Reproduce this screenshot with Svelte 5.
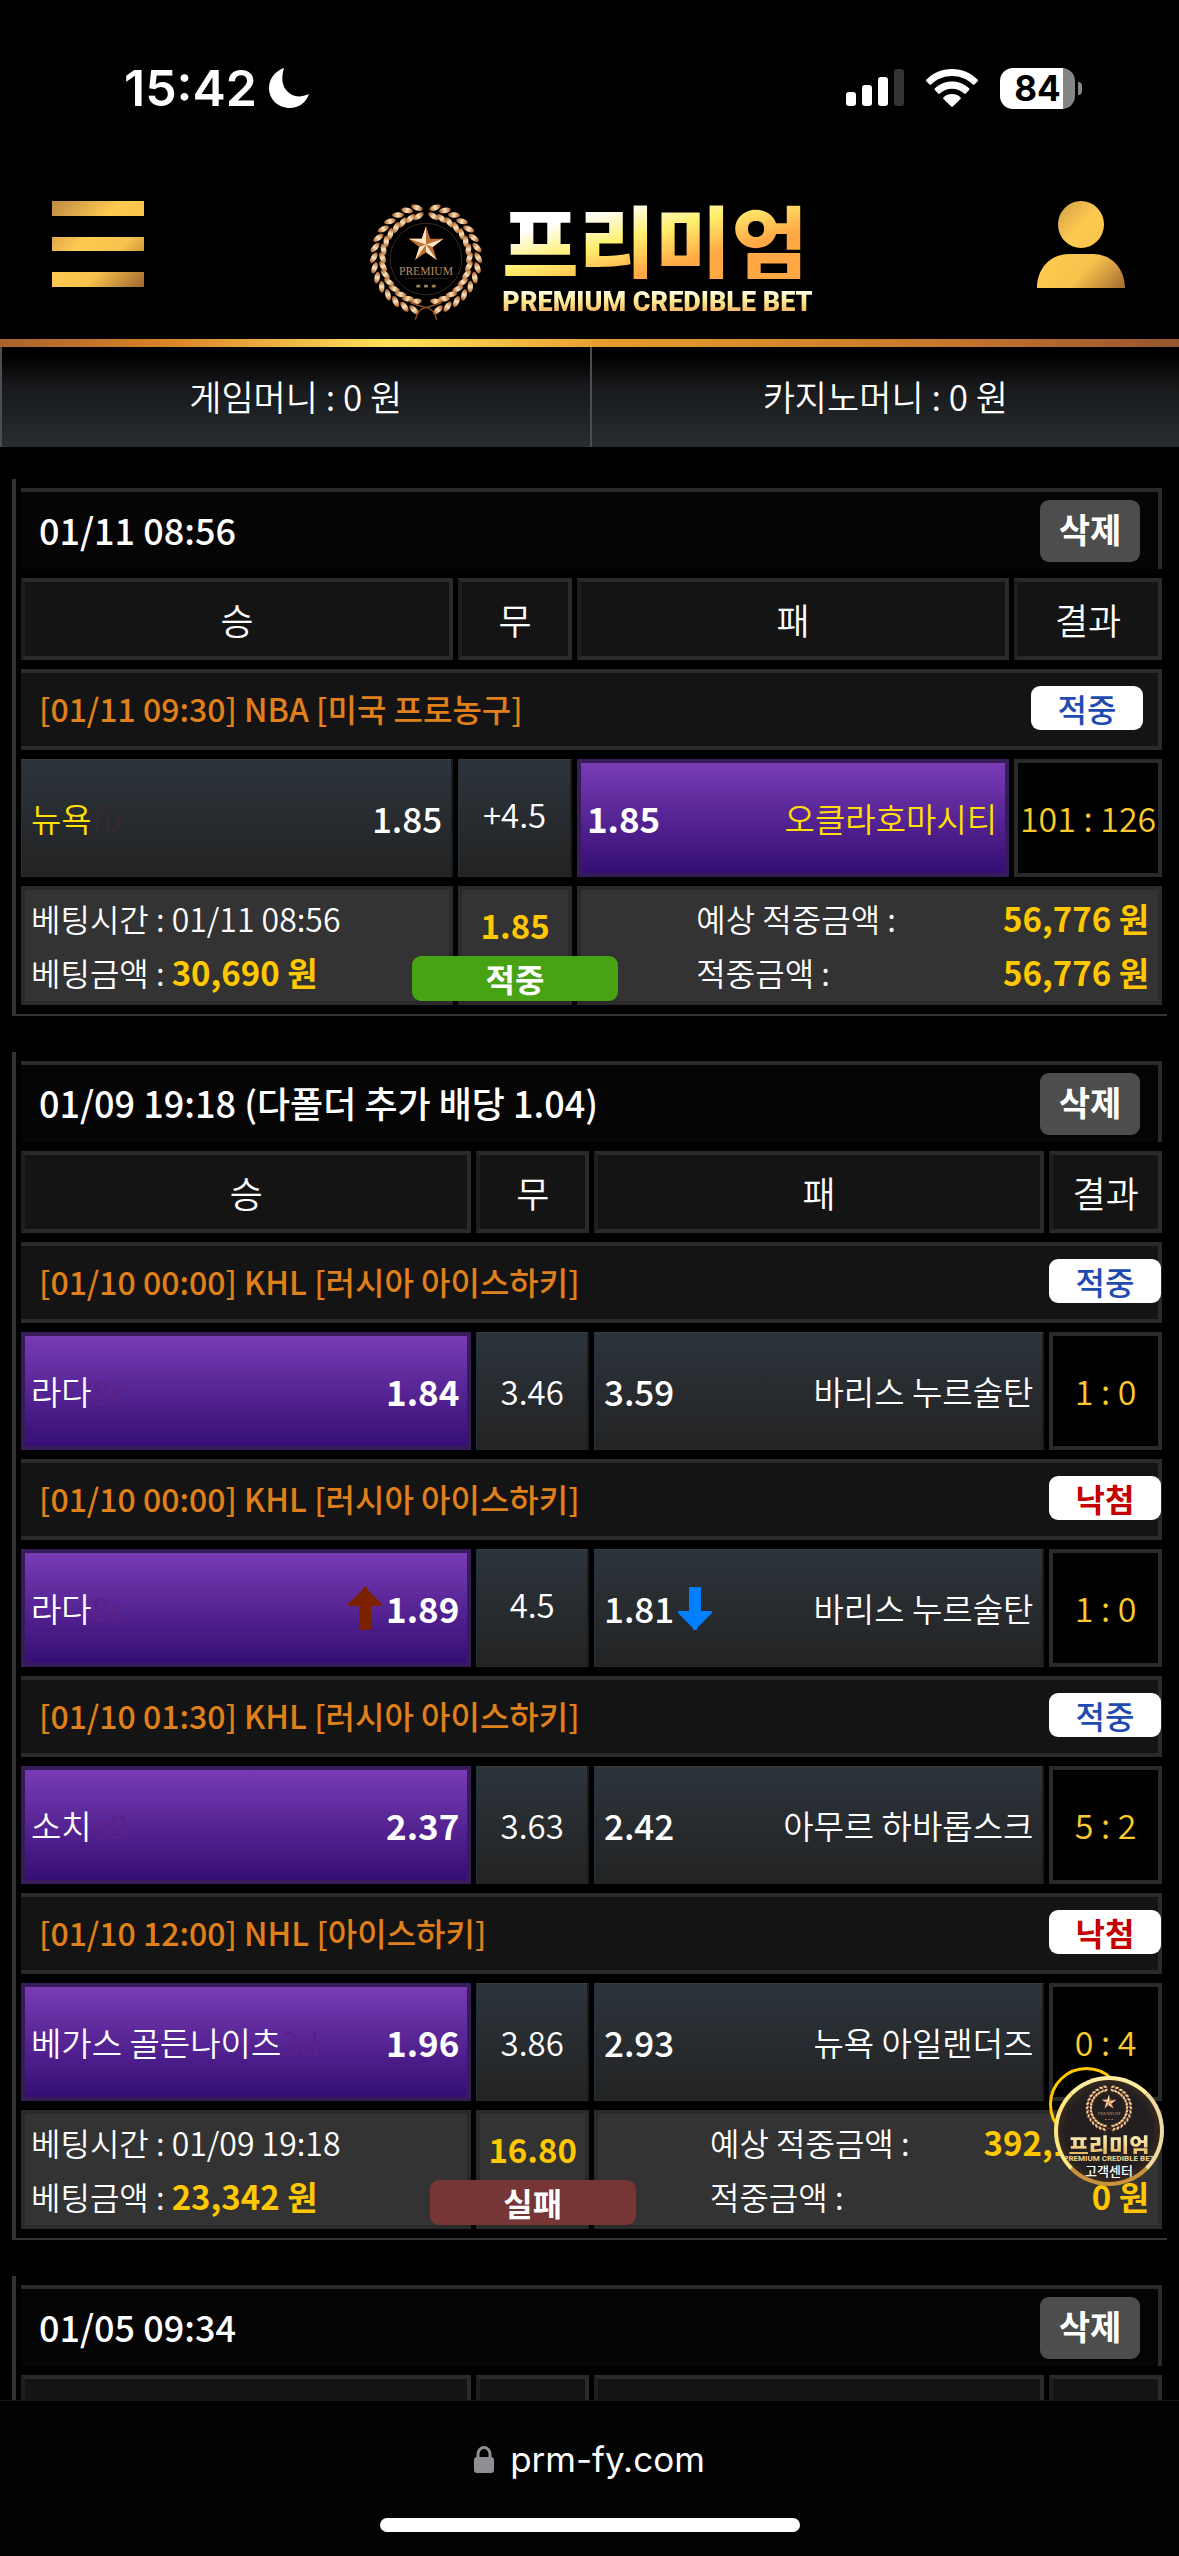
<script>
  const menu = ['승', '무', '패', '결과'];

  const slips = [
    {
      title: '01/11 08:56',
      wideScore: true,
      games: [
        {
          league: '[01/11 09:30] NBA [미국 프로농구]', hit: true,
          home: '뉴욕', tag: 'fb', homeOdds: '1.85', draw: '+4.5', handicap: true,
          away: '오클라호마시티', awayOdds: '1.85', pick: 'away', score: '101 : 126',
        },
      ],
      time: '01/11 08:56', stake: '30,690', odds: '1.85', hit: true,
      expected: '56,776', payout: '56,776',
    },
    {
      title: '01/09 19:18 (다폴더 추가 배당 1.04)',
      games: [
        {
          league: '[01/10 00:00] KHL [러시아 아이스하키]', hit: true,
          home: '라다', tag: '8c', homeOdds: '1.84', draw: '3.46',
          away: '바리스 누르술탄', awayOdds: '3.59', pick: 'home', score: '1 : 0',
        },
        {
          league: '[01/10 00:00] KHL [러시아 아이스하키]', hit: false,
          home: '라다', tag: '8c', homeOdds: '1.89', draw: '4.5', handicap: true, arrows: true,
          away: '바리스 누르술탄', awayOdds: '1.81', pick: 'home', score: '1 : 0',
        },
        {
          league: '[01/10 01:30] KHL [러시아 아이스하키]', hit: true,
          home: '소치', tag: 'e9', homeOdds: '2.37', draw: '3.63',
          away: '아무르 하바롭스크', awayOdds: '2.42', pick: 'home', score: '5 : 2',
        },
        {
          league: '[01/10 12:00] NHL [아이스하키]', hit: false,
          home: '베가스 골든나이츠', tag: '2d', homeOdds: '1.96', draw: '3.86',
          away: '뉴욕 아일랜더즈', awayOdds: '2.93', pick: 'home', score: '0 : 4',
        },
      ],
      time: '01/09 19:18', stake: '23,342', odds: '16.80', hit: false,
      expected: '392,145', payout: '0',
    },
    { title: '01/05 09:34', games: [] },
  ];

  // laurel leaves: two rows along each half of the wreath
  const leaves = [];
  for (let i = 0; i < 15; i++) {
    const a = 100 + i * 11.2;
    for (const side of [-1, 1]) {
      for (const [r, tilt] of [[54, 30], [45, -22]]) {
        const rad = (a * Math.PI) / 180;
        leaves.push({
          x: 60 + side * r * Math.cos(rad),
          y: 60 - r * Math.sin(rad),
          rot: side === 1 ? -a + tilt : a - tilt,
        });
      }
    }
  }
</script>

{#snippet emblem()}
  <svg class="emblem" viewBox="0 0 120 124" aria-hidden="true">
    <defs>
      <linearGradient id="leaf" x1="0" y1="0" x2="0" y2="1">
        <stop offset="0" stop-color="#a85a24" />
        <stop offset="0.5" stop-color="#ffe3b8" />
        <stop offset="1" stop-color="#a0541f" />
      </linearGradient>
    </defs>
    {#each leaves as l}
      <ellipse rx="2.8" ry="6.2" fill="url(#leaf)" transform="translate({l.x} {l.y}) rotate({l.rot})" />
    {/each}
    <path d="M49 123Q51 112 60 110Q70 108 78 103M71 123Q69 112 60 110Q50 108 42 103" fill="none" stroke="#8a4f24" stroke-width="1.4" />
    <circle cx="60" cy="60" r="37" fill="none" stroke="#3b2c22" stroke-width="1" />
    <path d="M60 26l4.300 13h13.700l-11 8.500 4.200 13.500L60 53l-11.200 8L53 47.500 42 39h13.700z" fill="#c06e32" />
    <path d="M60 26v19l-4.300-6zM78 39l-18 6 7 2.500zM71.200 61L60 45v8zM48.800 61L60 45l-7 2.500zM42 39l18 6-4.300-6z" fill="#ffe6c2" />
    <text x="60" y="76" text-anchor="middle" class="emblem-text">PREMIUM</text>
    <path d="M50 88h4M58 88h4M66 88h4" stroke="#a0805c" stroke-width="3" />
    <path d="M38 80h44" stroke="#3d2f24" stroke-width="1" stroke-dasharray="2 1" />
  </svg>
{/snippet}

{#snippet arrow(dir)}
  <svg class="arrow" viewBox="0 0 34 43" aria-hidden="true">
    {#if dir === 'up'}
      <path d="M15 0h4v2l15 15v2H23v24H11V19H0v-2L15 2z" fill="#7b2100" />
    {:else}
      <path d="M15 43h4v-2l15-15v-2H23V0H11v24H0v2l15 15z" fill="#007fff" />
    {/if}
  </svg>
{/snippet}

<div class="screen">
  <div class="status">
    <div class="clock">
      <span>15:42</span>
      <svg width="40" height="40" viewBox="0 0 40 40" aria-hidden="true">
        <path d="M15 0C12 10 13 18 18 23c5 6 13 7 22 3C37 35 29 40 21 40 9 40 0 31 0 20 0 11 6 3 15 0z" fill="#fff" />
      </svg>
    </div>
    <div class="signals">
      <svg width="58" height="38" viewBox="0 0 58 38" aria-hidden="true">
        <rect x="0" y="23" width="10" height="14" rx="3" fill="#fff" />
        <rect x="16" y="16" width="10" height="21" rx="3" fill="#fff" />
        <rect x="32" y="8" width="10" height="29" rx="3" fill="#fff" />
        <rect x="48" y="0" width="10" height="37" rx="3" fill="#333" />
      </svg>
      <svg width="52" height="38" viewBox="0 0 52 38" aria-hidden="true">
        <path d="M26 0C36 0 45 4 51.500 10.500c.6.600.6 1.200.1 1.800l-3.100 3.100c-.5.500-1.200.5-1.700 0C41 10 34 7 26 7S11 10 5.200 15.400c-.5.500-1.200.5-1.700 0L.4 12.300c-.5-.6-.5-1.200.1-1.800C7 4 16 0 26 0z" fill="#fff" />
        <path d="M26 12.500c6.500 0 12.500 2.500 17 6.800.6.600.6 1.200.1 1.800L39.800 24.400c-.5.500-1.100.5-1.700 0-3.300-3-7.500-4.700-12.100-4.700s-8.800 1.700-12.100 4.700c-.6.500-1.200.5-1.700 0L8.900 21.100c-.5-.6-.5-1.200.1-1.800 4.500-4.300 10.500-6.800 17-6.800z" fill="#fff" />
        <path d="M26 25c3.200 0 6.200 1.200 8.400 3.200.6.500.6 1.200.1 1.700l-7.600 7.600c-.5.500-1.200.5-1.700 0l-7.700-7.600c-.5-.5-.5-1.200.1-1.700C19.800 26.200 22.800 25 26 25z" fill="#fff" />
      </svg>
      <div class="battery"><span>84</span></div>
    </div>
  </div>

  <header>
    <button class="icon-btn" aria-label="메뉴">
      <svg width="92" height="86" viewBox="0 0 92 86">
        <defs>
          <linearGradient id="gold" gradientUnits="userSpaceOnUse" x1="0" y1="0" x2="92" y2="86">
            <stop offset="0" stop-color="#bd8a44" />
            <stop offset="0.4" stop-color="#ffca50" />
            <stop offset="0.65" stop-color="#f8c34d" />
            <stop offset="1" stop-color="#a0672e" />
          </linearGradient>
        </defs>
        <path d="M0 0h92v15H0zM0 36h92v14H0zM0 71h92v15H0z" fill="url(#gold)" />
      </svg>
    </button>
    <a class="logo" href="/">
      {@render emblem()}
      <span class="brand">
        <span class="brand-name">프리미엄</span>
        <span class="brand-sub">PREMIUM CREDIBLE BET</span>
      </span>
    </a>
    <button class="icon-btn" aria-label="내 정보">
      <svg width="88" height="88" viewBox="0 0 88 88">
        <path d="M44 0a23 23.500 0 1 1 0 47a23 23.500 0 1 1 0-47zM0 87C0 67 14 53 32 53H56C74 53 88 67 88 87z" fill="url(#gold)" />
      </svg>
    </button>
  </header>

  <div class="money">
    <span>게임머니 : 0 원</span>
    <span>카지노머니 : 0 원</span>
  </div>

  <main>
    {#each slips as slip}
      <table class:wide-score={slip.wideScore}>
        <colgroup><col class="c-team" /><col class="c-draw" /><col class="c-team" /><col class="c-score" /></colgroup>
        <tbody>
          <tr>
            <td colspan="4" class="title">
              <div class="title-row"><span>{slip.title}</span><button class="delete">삭제</button></div>
            </td>
          </tr>
          <tr>
            {#each menu as m}<th>{slip.games.length ? m : ''}</th>{/each}
          </tr>
          {#each slip.games as g}
            <tr>
              <td colspan="4" class="league">
                {g.league}<span class="badge" class:miss={!g.hit}>{g.hit ? '적중' : '낙첨'}</span>
              </td>
            </tr>
            <tr class:yellow={slip.wideScore}>
              <td class="pick" class:on={g.pick === 'home'}>
                <div class="side">
                  <span>{g.home}<span class="tag">{g.tag}</span></span>
                  <span class="odds">{#if g.arrows}{@render arrow('up')}{/if}<b>{g.homeOdds}</b></span>
                </div>
              </td>
              <td class="pick draw" class:handicap={g.handicap}>{g.draw}</td>
              <td class="pick" class:on={g.pick === 'away'}>
                <div class="side">
                  <span class="odds"><b>{g.awayOdds}</b>{#if g.arrows}{@render arrow('down')}{/if}</span>
                  <span>{g.away}</span>
                </div>
              </td>
              <td class="score">{g.score}</td>
            </tr>
          {/each}
          {#if slip.time}
            <tr>
              <td class="sum">
                <div class="line">베팅시간 : {slip.time}</div>
                <div class="line">베팅금액 : <b>{slip.stake} 원</b></div>
              </td>
              <td class="sum total">
                <b>{slip.odds}</b>
                <span class="verdict" class:lost={!slip.hit}>{slip.hit ? '적중' : '실패'}</span>
              </td>
              <td colspan="2" class="sum">
                <div class="line payout"><span>예상 적중금액 :</span><b>{slip.expected} 원</b></div>
                <div class="line payout"><span>적중금액 :</span><b>{slip.payout} 원</b></div>
              </td>
            </tr>
          {/if}
        </tbody>
      </table>
    {/each}
  </main>

  <a class="support" href="/support">
    <span class="support-ring"></span>
    <span class="support-disc">
      {@render emblem()}
      <span class="support-name">프리미엄</span>
      <span class="support-sub">PREMIUM CREDIBLE BET</span>
      <span class="support-label">고객센터</span>
    </span>
  </a>

  <footer>
    <div class="address">
      <svg width="20" height="27" viewBox="0 0 20 27" aria-hidden="true">
        <path d="M4 13V8a6 6.500 0 0 1 12 0v5" fill="none" stroke="#8e8e93" stroke-width="3" />
        <rect x="0" y="11" width="20" height="16" rx="3" fill="#8e8e93" />
      </svg>
      <span>prm-fy.com</span>
    </div>
    <div class="home-bar"></div>
  </footer>
</div>

<style>
  :global(body) {
    background: #000;
  }
  .screen {
    position: relative;
    display: flex;
    flex-direction: column;
    height: 100vh;
    overflow: hidden;
    background: #000;
    color: #fff;
    font-family: "Noto Sans CJK KR", sans-serif;
    font-weight: 350;
  }
  button {
    border: 0;
    padding: 0;
    background: none;
    color: inherit;
    font-family: inherit;
  }
  b {
    font-weight: 700;
  }

  .status {
    display: flex;
    flex: none;
    justify-content: space-between;
    align-items: center;
    height: 176px;
    padding: 0 104px 0 124px;
    font-family: Inter, sans-serif;
    font-weight: 600;
  }
  .clock {
    display: flex;
    align-items: center;
    gap: 12px;
    font-size: 50px;
  }
  .signals {
    display: flex;
    align-items: center;
    gap: 22px;
  }
  .battery {
    position: relative;
    width: 75px;
    height: 41px;
    border-radius: 13px;
    background: linear-gradient(90deg, #fff 63px, #858585 63px);
    color: #000;
    font-size: 35px;
    font-weight: 700;
    line-height: 41px;
    text-align: center;
  }
  .battery::after {
    content: "";
    position: absolute;
    right: -7px;
    top: 14px;
    width: 4px;
    height: 13px;
    border-radius: 0 4px 4px 0;
    background: #858585;
  }

  header {
    display: flex;
    flex: none;
    justify-content: space-between;
    align-items: flex-start;
    height: 163px;
    padding: 25px 54px 0 52px;
    box-sizing: border-box;
  }
  .icon-btn svg {
    display: block;
  }
  .logo {
    display: flex;
    gap: 18px;
    color: inherit;
    text-decoration: none;
  }
  .emblem {
    display: block;
    width: 116px;
    height: 120px;
  }
  .emblem-text {
    fill: #b98c5f;
    font-family: "Liberation Serif", serif;
    font-size: 12px;
    font-weight: 400;
  }
  .brand {
    display: flex;
    flex-direction: column;
  }
  .brand-name {
    background: linear-gradient(165deg, #fff 22%, #ffef6e 44%, #ffa844 68%);
    background-clip: text;
    color: transparent;
    font-size: 83px;
    font-weight: 900;
    line-height: 78px;
  }
  .brand-sub {
    background: linear-gradient(#fff 20%, #ffee9a 45%, #f6a24a 80%);
    background-clip: text;
    color: transparent;
    font-family: Roboto, sans-serif;
    font-size: 27px;
    font-weight: 900;
    line-height: 46px;
  }

  .money {
    display: grid;
    flex: none;
    grid-template-columns: 1fr 1fr;
    height: 108px;
    box-sizing: border-box;
    border-top: 8px solid;
    border-image: linear-gradient(90deg, #a8622c, #d98228 14%, #ffe25c 33%, #e79a2c 52%, #c8762c 80%, #96552e) 1;
    border-right: 0;
    border-bottom: 0;
    border-left: 0;
    background: linear-gradient(#000 8px, #17191b 40px, #292d31);
    font-size: 35px;
    line-height: 98px;
    text-align: center;
  }
  .money span {
    border-left: 2px solid #4b4d50;
  }

  main {
    flex: 1;
    min-height: 0;
    overflow: hidden;
    padding: 32px 12px 0;
  }
  table {
    width: 100%;
    table-layout: fixed;
    margin-bottom: 36px;
    border: solid #333;
    border-width: 0 0 2px 4px;
    border-collapse: separate;
    border-spacing: 5px 9px;
  }
  .c-team {
    width: 40%;
  }
  .c-draw,
  .c-score {
    width: 10%;
  }
  .wide-score .c-team {
    width: 38%;
  }
  .wide-score .c-score {
    width: 13%;
  }
  td,
  th {
    position: relative;
    box-sizing: border-box;
    padding: 0;
    border: 0 solid #2a2a2a;
  }
  th {
    height: 82px;
    border-width: 4px;
    border-left-color: #1e1e1e;
    background: #141414;
    font-size: 36px;
    font-weight: 350;
    line-height: 40px;
  }
  .title {
    height: 81px;
    border-width: 4px 4px 0 0;
    background: #050505;
    font-size: 36px;
    font-weight: 500;
    line-height: 40px;
  }
  .title-row {
    display: flex;
    justify-content: space-between;
    align-items: center;
    padding: 0 18px 0 18px;
  }
  .title-row span {
    padding-bottom: 4px;
  }
  .delete {
    width: 100px;
    height: 62px;
    padding-bottom: 4px;
    border-radius: 9px;
    background: #4d4d4d;
    font-size: 34px;
    font-weight: 700;
  }
  .league {
    height: 81px;
    padding: 0 0 4px 18px;
    border-width: 4px 4px 4px 0;
    background: #141414;
    color: #e0801a;
    font-size: 32px;
    font-weight: 500;
    line-height: 40px;
  }
  .badge {
    position: absolute;
    top: 13px;
    right: -3px;
    width: 112px;
    border-radius: 9px;
    background: #fff;
    color: #1f4bb0;
    font-weight: 500;
    line-height: 44px;
    text-align: center;
  }
  .wide-score .badge {
    right: 15px;
  }
  .badge.miss {
    color: #c40000;
    font-weight: 700;
  }
  .pick {
    height: 118px;
    border-width: 1px 2px 1px 1px;
    border-color: #3b3b3b #1b1b1b #232a30 #26303a;
    background: linear-gradient(#2c343c, #232323);
    font-size: 33px;
    line-height: 40px;
  }
  .pick.on {
    border: 4px solid #371c5a;
    background: linear-gradient(#783bb4, #350e74);
  }
  .side {
    display: flex;
    justify-content: space-between;
    align-items: center;
    padding: 0 9px;
  }
  .on .side {
    padding: 0 8px 0 6px;
  }
  .yellow .side {
    color: #ffe000;
  }
  .yellow .side b {
    color: #fff;
  }
  .side b {
    font-size: 35px;
    font-weight: 500;
  }
  .on .side b {
    font-weight: 700;
  }
  .side .tag {
    color: #36292e;
  }
  .on .side .tag {
    color: #5c2087;
  }
  .odds {
    display: flex;
    align-items: center;
    gap: 4px;
  }
  .arrow {
    width: 34px;
    height: 43px;
  }
  .draw {
    text-align: center;
  }
  .handicap {
    padding-bottom: 8px;
  }
  .score {
    border: 4px solid #2a2a2a;
    color: #fcc92e;
    font-size: 34px;
    line-height: 40px;
    text-align: center;
    white-space: nowrap;
  }
  .sum {
    height: 119px;
    padding-bottom: 2px;
    border: 4px solid #2a2a2a;
    background: #333;
    font-size: 32px;
  }
  .sum b {
    color: #ffc800;
    font-size: 33px;
  }
  .line {
    padding: 0 9px 0 6px;
    line-height: 54px;
  }
  .payout {
    display: flex;
    justify-content: space-between;
    padding-left: 20%;
  }
  .total {
    line-height: 70px;
    text-align: center;
    vertical-align: top;
  }
  .verdict {
    position: absolute;
    z-index: 1;
    top: 66px;
    left: 50%;
    width: 206px;
    margin-left: -103px;
    border-radius: 9px;
    background: #47a313;
    font-weight: 700;
    line-height: 45px;
  }
  .verdict.lost {
    background: #763636;
  }

  .support {
    position: absolute;
    right: 15px;
    bottom: 370px;
    z-index: 2;
    width: 115px;
    height: 119px;
    color: #fff;
    text-decoration: none;
  }
  .support-ring {
    position: absolute;
    top: 0;
    left: 0;
    width: 69px;
    height: 69px;
    border: 3px solid #ffc800;
    border-radius: 50%;
  }
  .support-disc {
    position: absolute;
    right: 0;
    bottom: 0;
    display: flex;
    flex-direction: column;
    align-items: center;
    width: 110px;
    height: 110px;
    box-sizing: border-box;
    padding-top: 4px;
    border: 4px solid;
    border-color: #ffeea0 #f0d9a0 #c9923c #ffe680;
    border-radius: 50%;
    background: radial-gradient(#231f20 60%, #5a3c1c 90%);
    overflow: hidden;
    white-space: nowrap;
  }
  .support-disc .emblem {
    width: 50px;
    height: 50px;
    flex: none;
  }
  .support-name {
    background: linear-gradient(#fff6c0, #e9b765);
    background-clip: text;
    color: transparent;
    font-size: 22px;
    font-weight: 900;
    line-height: 20px;
  }
  .support-sub {
    color: #f0d68a;
    font-family: Roboto, sans-serif;
    font-size: 8px;
    font-weight: 700;
    line-height: 10px;
  }
  .support-label {
    font-size: 13px;
    font-weight: 500;
    line-height: 14px;
  }

  footer {
    display: flex;
    flex: none;
    flex-direction: column;
    justify-content: space-between;
    align-items: center;
    height: 156px;
    box-sizing: border-box;
    padding: 36px 0 24px;
    border-top: 1px solid #151515;
    background: #030303;
    font-family: Inter, sans-serif;
    font-size: 35px;
    font-weight: 400;
  }
  .address {
    display: flex;
    align-items: center;
    gap: 16px;
    line-height: 44px;
  }
  .home-bar {
    width: 420px;
    height: 14px;
    border-radius: 7px;
    background: #fff;
  }
</style>
